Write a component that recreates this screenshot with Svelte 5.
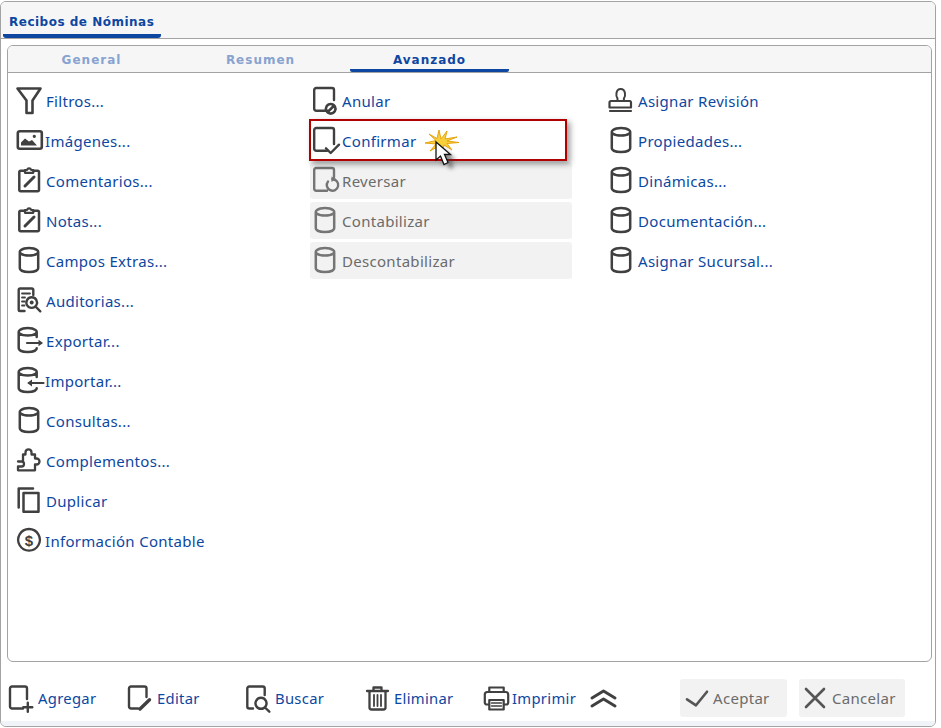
<script>
	const DOC = 'M16 24.7H5.2a2 2 0 0 1-2-2V4a2 2 0 0 1 2-2H21a2 2 0 0 1 2 2V';
	const CYL = 'M14 2a9.2 3.8 0 1 0 .01 0ZM4.8 5.8V22.3C4.8 24.6 9 26 14 26s9.2-1.4 9.2-3.7V5.8';
	const FDOC = 'M15 24.5H4a2 2 0 0 1-2-2V4.5a2 2 0 0 1 2-2H17a2 2 0 0 1 2 2V';

	const icons = {
		filter: [{ d: 'M2.5 2.5H25.5L17.5 14.5V27H11.5V14.5Z', w: 2.6 }],
		image: [
			{ d: 'M4.8 5.2H24.8a2 2 0 0 1 2 2V20.8a2 2 0 0 1-2 2H4.8a2 2 0 0 1-2-2V7.2a2 2 0 0 1 2-2Z', w: 2.6 },
			{ d: 'M6 19.5V16.5L10 12.5L14 15.5L17 14L22 19.5ZM19.3 8.8a1.6 1.6 0 1 1-.01 0Z', solid: true }
		],
		clip: [
			{ d: 'M9.5 4.8H5.5a1.2 1.2 0 0 0-1.2 1.2V24a1.2 1.2 0 0 0 1.2 1.2H22.8A1.2 1.2 0 0 0 24 24V6a1.2 1.2 0 0 0-1.2-1.2H18.5', w: 2.5 },
			{ d: 'M10 6.8V4H12a2.2 2.2 0 0 1 4.2 0H18.3V6.8Z', w: 2.2 },
			{ d: 'M10 20L19 11', w: 3 }
		],
		db: [{ d: CYL, w: 2.5 }],
		audit: [
			{ d: 'M9.5 25H5a1.3 1.3 0 0 1-1.3-1.3V3.8A1.3 1.3 0 0 1 5 2.5H17A1.3 1.3 0 0 1 18.3 3.8V9', w: 2.4 },
			{ d: 'M7 7.5H15M7 11.5H10M7 15.5H9.5M7 19.5H9.5', w: 1.8 },
			{ d: 'M16.7 11.3a5.3 5.3 0 1 0 .01 0ZM20.5 20.5L25.3 25.3', w: 2.4 },
			{ d: 'M16.7 14.5a2 2 0 1 0 .01 0Z', solid: true }
		],
		export: [
			{ d: 'M12.7 2a9 3.8 0 1 0 .01 0ZM3.7 5.8V22.3C3.7 24.6 7.7 26 12.7 26s9-1.4 9-3.7M21.7 5.8V11', w: 2.5 },
			{ d: 'M12 17H26', w: 2.2 },
			{ d: 'M23.5 13.8L28 17L23.5 20.2Z', solid: true }
		],
		import: [
			{ d: 'M12.7 2a9 3.8 0 1 0 .01 0ZM3.7 5.8V22.3C3.7 24.6 7.7 26 12.7 26s9-1.4 9-3.7M21.7 5.8V11', w: 2.5 },
			{ d: 'M14 17H28.5', w: 2.2 },
			{ d: 'M17 13.5L12.2 17L17 20.5Z', solid: true }
		],
		puzzle: [
			{ d: 'M3 15.5H6.5a2.5 2.5 0 0 1 0 5H3V24.3H20V18.5H21.5a3 3 0 0 0 0-6H20V8.5H16.5V6.3a3 3 0 0 0-6 0V8.5H8V15.5', w: 2.3 }
		],
		copy: [{ d: 'M8.5 7H23.5V25.8H8.5ZM3.7 21.5V2.5H18', w: 2.5 }],
		dollar: [{ d: 'M14 3a10.8 10.8 0 1 0 .01 0Z', w: 2.3 }],
		void: [
			{ d: DOC + '14', w: 2.4 },
			{ d: 'M19.7 18a4.8 4.8 0 1 0 .01 0ZM16.4 26.2L23 19.7', w: 2.6 }
		],
		confirm: [
			{ d: DOC + '18', w: 2.4 },
			{ d: 'M15 22.3L19.7 27L28 18.7', w: 2.4 }
		],
		reverse: [
			{ d: DOC + '11', w: 2.4 },
			{ d: 'M17 15.5a5.7 5.7 0 1 0 4.3-2.2', w: 2.4 },
			{ d: 'M20.5 10.5V16L25 13Z', solid: true }
		],
		stamp: [
			{ d: 'M10.5 14.5V12.5C8.7 10.5 8.5 3 13.7 3S18.7 10.5 16.9 12.5V14.5', w: 2 },
			{ d: 'M4 15H23A1.5 1.5 0 0 1 24 16.5V21.5H2.5V16.5A1.5 1.5 0 0 1 4 15ZM3 25H24', w: 2.2 }
		],
		add: [
			{ d: FDOC + '15', w: 2.4 },
			{ d: 'M15.3 23.3H24.3M19.8 18.8V27.8', w: 2.4 }
		],
		edit: [
			{ d: 'M11 24.5H4a2 2 0 0 1-2-2V4.5a2 2 0 0 1 2-2H17.5a2 2 0 0 1 2 2V13', w: 2.4 },
			{ d: 'M13 25L22.5 15.8', w: 3.4 }
		],
		search: [
			{ d: 'M8 24.5H4.3a2 2 0 0 1-2-2V4.5a2 2 0 0 1 2-2H17.7a2 2 0 0 1 2 2V11', w: 2.4 },
			{ d: 'M16 13.8a5.5 5.5 0 1 0 .01 0ZM20 23.5L24.3 27.7', w: 2.4 }
		],
		trash: [
			{ d: 'M5.5 7.5V23.5a2 2 0 0 0 2 2H19.5a2 2 0 0 0 2-2V7.5M3 7H24M9.5 6.5V3.5H17.5V6.5', w: 2.3 },
			{ d: 'M10 11V22M13.5 11V22M17 11V22', w: 1.8 }
		],
		print: [
			{ d: 'M7.3 8V3.5H21.7V8M7 20.5H4.8a2 2 0 0 1-2-2V10.5a2.5 2.5 0 0 1 2.5-2.5H23.7a2.5 2.5 0 0 1 2.5 2.5V18.5a2 2 0 0 1-2 2H22', w: 2.2 },
			{ d: 'M7.3 16H21.7V25.5H7.3Z', w: 2.2 },
			{ d: 'M9.5 19H19.5M9.5 22H19.5', w: 1.4 }
		],
		up: [{ d: 'M1 9L12.5 2L24 9M1 17L12.5 10L24 17', w: 3 }],
		check: [{ d: 'M3 14.3L12 20.3L23 6.7', w: 2.6 }],
		close: [{ d: 'M3 3L21 21M21 3L3 21', w: 2.6 }]
	};

	const columns = [
		[
			{ icon: 'filter', label: 'Filtros...' },
			{ icon: 'image', label: 'Imágenes...', tight: true },
			{ icon: 'clip', label: 'Comentarios...' },
			{ icon: 'clip', label: 'Notas...' },
			{ icon: 'db', label: 'Campos Extras...' },
			{ icon: 'audit', label: 'Auditorias...' },
			{ icon: 'export', label: 'Exportar...' },
			{ icon: 'import', label: 'Importar...', tight: true },
			{ icon: 'db', label: 'Consultas...' },
			{ icon: 'puzzle', label: 'Complementos...' },
			{ icon: 'copy', label: 'Duplicar' },
			{ icon: 'dollar', label: 'Información Contable', tight: true }
		],
		[
			{ icon: 'void', label: 'Anular' },
			{ icon: 'confirm', label: 'Confirmar' },
			{ icon: 'reverse', label: 'Reversar', off: true },
			{ icon: 'db', label: 'Contabilizar', off: true },
			{ icon: 'db', label: 'Descontabilizar', off: true }
		],
		[
			{ icon: 'stamp', label: 'Asignar Revisión' },
			{ icon: 'db', label: 'Propiedades...' },
			{ icon: 'db', label: 'Dinámicas...' },
			{ icon: 'db', label: 'Documentación...' },
			{ icon: 'db', label: 'Asignar Sucursal...' }
		]
	];

	const tabs = ['General', 'Resumen', 'Avanzado'];
	const footer = [
		{ icon: 'add', label: 'Agregar', width: 119 },
		{ icon: 'edit', label: 'Editar', width: 118 },
		{ icon: 'search', label: 'Buscar', width: 119 },
		{ icon: 'trash', label: 'Eliminar', width: 118 },
		{ icon: 'print', label: 'Imprimir', width: 109 }
	];
</script>

{#snippet icon(name)}
	<svg class="icon" viewBox="0 0 30 30" width="30" height="30">
		{#each icons[name] as p}
			<path d={p.d} class:solid={p.solid} stroke-width={p.w ?? 2.2} />
		{/each}
		{#if name === 'dollar'}
			<text x="14" y="19.5" text-anchor="middle">$</text>
		{/if}
	</svg>
{/snippet}

<div class="window">
	<header class="title-bar">
		<div class="title">Recibos de Nóminas</div>
	</header>

	<section class="panel">
		<nav class="subtabs">
			{#each tabs as tab, i}
				<div class="subtab" class:active={i === 2}>{tab}</div>
			{/each}
		</nav>
		<div class="grid">
			{#each columns as col}
				<div class="col">
					{#each col as item}
						<div class="item" class:off={item.off} class:tight={item.tight}>
							{@render icon(item.icon)}
							<span>{item.label}</span>
						</div>
					{/each}
				</div>
			{/each}
		</div>
	</section>

	<footer class="actions">
		{#each footer as b}
			<div class="action" style="width: {b.width}px">
				{@render icon(b.icon)}
				<span>{b.label}</span>
			</div>
		{/each}
		<svg class="icon chevrons" viewBox="0 0 25 19" width="25" height="19">
			<path d={icons.up[0].d} stroke-width="3" />
		</svg>
		<div class="buttons">
			<div class="btn accept">
				<svg class="icon" viewBox="0 0 26 26" width="26" height="26"><path d={icons.check[0].d} stroke-width="2.6" /></svg>
				<span>Aceptar</span>
			</div>
			<div class="btn cancel">
				<svg class="icon" viewBox="0 0 24 24" width="24" height="24"><path d={icons.close[0].d} stroke-width="2.6" /></svg>
				<span>Cancelar</span>
			</div>
		</div>
	</footer>
	<div class="strip"></div>

	<!-- tutorial highlight laid over the Confirmar row -->
	<div class="highlight"></div>
	<svg class="pointer" viewBox="0 0 40 44" width="40" height="44">
		<defs>
			<filter id="drop" x="-30%" y="-30%" width="180%" height="180%">
				<feGaussianBlur stdDeviation="2" />
			</filter>
		</defs>
		<path d="M17 2L19 11L25 3L23 11L35 9L25 13L37 14.5L25 15.5L30 22L22 17L20 26L17 18L8 23L14 16L3 15L14 12.5L7 6L15 10.5Z" fill="#f7cf3a" stroke="#e6a512" stroke-width="1" />
		<path d="M17 17L17 34L21 30L25 38L29 36L25 28.5L31 28.5Z" fill="#333" opacity="0.6" filter="url(#drop)" transform="translate(3 3)" />
		<path d="M14 14V32L18.5 28L22 36.5L26 34.5L22.5 26.5H28.5Z" fill="#fff" stroke="#111" stroke-width="1.3" />
	</svg>
</div>

<style>
	:global(body) {
		background: #fff;
	}

	.window {
		position: relative;
		box-sizing: border-box;
		width: 936px;
		height: 726px;
		margin-top: 1px;
		display: flex;
		flex-direction: column;
		border: 1px solid #a3a3a3;
		border-radius: 6px;
		background: #fff;
		overflow: hidden;
		font-family: 'Noto Sans', sans-serif;
		font-size: 15px;
		letter-spacing: 0.3px;
		color: #0d47a1;
	}

	.title-bar {
		height: 37px;
		flex: none;
		box-sizing: border-box;
		padding-left: 2px;
		background: #f6f6f6;
		border-bottom: 1px solid #a3a3a3;
	}

	.title {
		box-sizing: border-box;
		width: 158px;
		height: 36px;
		padding: 13px 0 0 6px;
		border-bottom: 4px solid #0d47a1;
		border-radius: 0 0 3px 3px;
		font-family: 'DejaVu Sans', sans-serif;
		font-size: 12px;
		font-weight: 700;
		letter-spacing: 0.5px;
		color: #0d47a1;
	}

	.panel {
		flex: none;
		box-sizing: border-box;
		height: 617px;
		margin: 6px 3px 0 6px;
		border: 1px solid #a3a3a3;
		border-radius: 6px;
		overflow: hidden;
	}

	.subtabs {
		height: 26px;
		display: flex;
		gap: 10px;
		padding-left: 4px;
		background: #f6f6f6;
		border-bottom: 1px solid #a3a3a3;
	}

	.subtab {
		box-sizing: border-box;
		width: 159px;
		height: 26px;
		padding-top: 7px;
		text-align: center;
		font-family: 'DejaVu Sans', sans-serif;
		font-size: 12px;
		font-weight: 700;
		letter-spacing: 1px;
		color: #88a3d0;
	}

	.subtab.active {
		color: #0d47a1;
		border-bottom: 3px solid #0d47a1;
		border-radius: 0 0 2px 2px;
	}

	.grid {
		display: grid;
		grid-template-columns: 302px 296px 1fr;
		padding: 9px 0 0 0;
	}

	.col {
		display: flex;
		flex-direction: column;
		gap: 3px;
	}

	.col:first-child .item {
		padding-left: 7px;
	}

	.col:last-child .item {
		padding-left: 0;
	}

	.col:nth-child(2) .item {
		width: 262px;
		padding-left: 0;
	}

	.item {
		box-sizing: border-box;
		height: 37px;
		display: flex;
		align-items: center;
		gap: 1px;
		border-radius: 3px;
		white-space: nowrap;
	}

	.item .icon {
		margin-left: 1px;
	}

	.col:first-child .item .icon {
		margin-left: 0;
	}

	.item.tight span {
		margin-left: -1px;
	}

	.item.off {
		background: #f2f2f2;
		color: #6b6b6b;
	}

	.icon {
		flex: none;
		overflow: visible;
		color: #404040;
	}

	.off .icon {
		color: #757575;
	}

	.icon path {
		fill: none;
		stroke: currentColor;
		stroke-linejoin: round;
		stroke-linecap: round;
	}

	.icon path.solid {
		fill: currentColor;
		stroke: none;
	}

	.icon text {
		font-family: 'Liberation Sans', sans-serif;
		font-size: 15px;
		font-weight: 700;
		letter-spacing: 0;
		fill: #404040;
	}

	.actions {
		flex: 1;
		display: flex;
		align-items: center;
		padding: 14px 0 0 7px;
		position: relative;
	}

	.action {
		display: flex;
		align-items: center;
		flex: none;
		white-space: nowrap;
		font-size: 14.8px;
	}

	.action span {
		margin-top: -2px;
	}

	.buttons {
		margin-left: 64px;
		margin-top: -1px;
		display: flex;
		gap: 12px;
	}

	.btn {
		box-sizing: border-box;
		height: 38px;
		display: flex;
		align-items: center;
		background: #f2f2f2;
		border-radius: 3px;
		color: #6b6b6b;
		white-space: nowrap;
	}

	.btn .icon {
		color: #555;
	}

	.accept {
		width: 107px;
		padding-left: 4px;
		gap: 3px;
	}

	.cancel {
		width: 106px;
		padding-left: 4px;
		gap: 5px;
	}

	.strip {
		height: 5px;
		flex: none;
		background: #f0f3f7;
	}

	.highlight {
		position: absolute;
		left: 308px;
		top: 117px;
		width: 258px;
		height: 42px;
		box-sizing: border-box;
		border: 2px solid #b00000;
		box-shadow: 3px 3px 6px rgba(0, 0, 0, 0.4);
		background: transparent;
	}

	.pointer {
		position: absolute;
		left: 421px;
		top: 126px;
		overflow: visible;
	}
</style>
